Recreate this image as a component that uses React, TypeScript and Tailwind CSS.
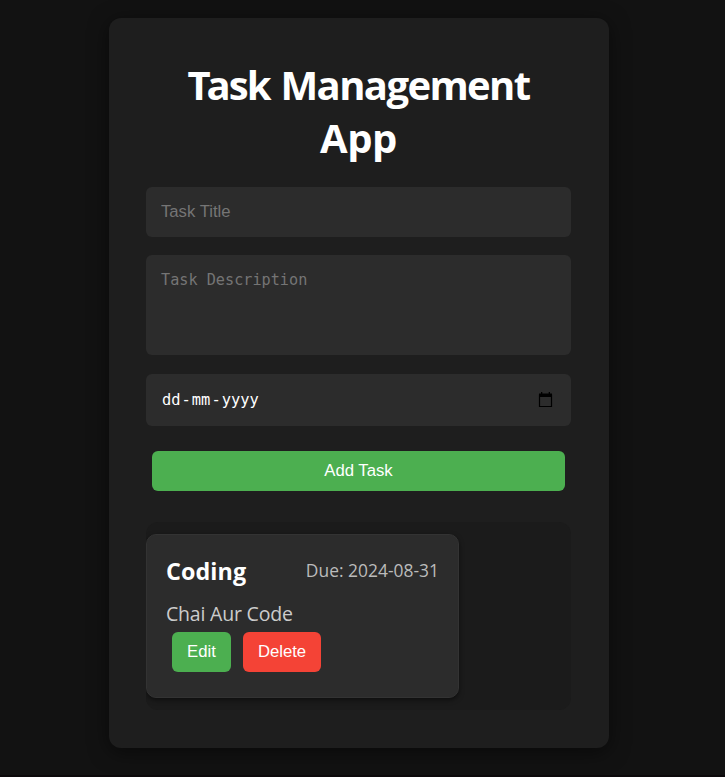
export default function App() {
  return (
    <div className="h-[777px] overflow-hidden border-b-2 border-[#0c090b] bg-[#121212] pt-[18px] pl-[109px] font-['Open_Sans','Noto_Sans',sans-serif] text-white">
      <main className="h-[730px] w-[500px] rounded-[12px] bg-[#1e1e1e] px-[37px] pt-[40px] shadow-[0_4px_20px_rgba(0,0,0,0.5)]">
        <h1 className="h-[129px] w-[425px] text-center text-[40px] leading-[53px] font-bold tracking-[-0.4px] whitespace-nowrap">
          <span className="tracking-[-4px]">T</span>
          <span className="tracking-[-2px]">ask</span>{' '}
          <span className="ml-[1px] tracking-[-1.6px]">Management</span>
          <br />
          App
        </h1>
        <form className="flex w-[425px] flex-col" onSubmit={(e) => e.preventDefault()}>
          <input
            placeholder="Task Title"
            className="h-[50px] rounded-[6px] bg-[#2c2c2c] px-[15px] font-['Liberation_Sans',sans-serif] text-[16.7px] outline-none placeholder:text-[#757575]"
          />
          <textarea
            placeholder="Task Description"
            className="mt-[18px] h-[100px] resize-none rounded-[6px] bg-[#2c2c2c] px-[15px] py-[15px] font-['DejaVu_Sans_Mono',monospace] text-[15.2px] leading-[20px] outline-none placeholder:text-[#757575]"
          />
          <div className="mt-[19px] flex h-[52px] items-center justify-between rounded-[6px] bg-[#2c2c2c] pr-[18px] pl-[15px] font-['DejaVu_Sans_Mono',monospace] text-[15.4px]">
            <div className="flex pt-[2px]">
              <span className="px-px">dd</span>
              <span>-</span>
              <span className="px-px">mm</span>
              <span>-</span>
              <span className="px-px">yyyy</span>
            </div>
            <svg width="15" height="16" viewBox="0 0 15 16" fill="none">
              <path d="M1.5 3h12v11.5h-12z" stroke="#000" strokeWidth="1.2" />
              <path d="M1 1.5h13v3.5H1zM3 0h1.3v2H3zM10.7 0H12v2h-1.3z" fill="#000" />
            </svg>
          </div>
          <button className="mx-[6px] mt-[25px] h-[40px] rounded-[6px] bg-[#4caf50] font-['Liberation_Sans',sans-serif] text-[16.7px]">
            Add Task
          </button>
        </form>
        <section className="mt-[31px] h-[188px] w-[425px] overflow-hidden rounded-[12px] bg-[#1b1b1b] pt-[12px]">
          <article className="h-[164px] w-[313px] rounded-[10px] border border-[#333] bg-[#2c2c2c] px-[19px] pt-[19px] shadow-[0_2px_5px_rgba(0,0,0,0.5)]">
            <div className="flex h-[34px] items-center justify-between whitespace-nowrap">
              <h2 className="text-[23.3px] font-bold tracking-[0.1px]">Coding</h2>
              <span className="pb-[2px] text-[17.4px] tracking-[0.02px] text-[#bbb]">Due: 2024-08-31</span>
            </div>
            <p className="mt-[12px] h-[32px] text-[19.5px] leading-[28px] tracking-[-0.2px] text-[#ccc]">Chai Aur Code</p>
            <div className="flex gap-[12px] pl-[6px] font-['Liberation_Sans',sans-serif] text-[16.7px]">
              <button className="h-[40px] w-[59px] rounded-[6px] bg-[#4caf50]">Edit</button>
              <button className="h-[40px] w-[78px] rounded-[6px] bg-[#f44336]">Delete</button>
            </div>
          </article>
        </section>
      </main>
    </div>
  );
}
